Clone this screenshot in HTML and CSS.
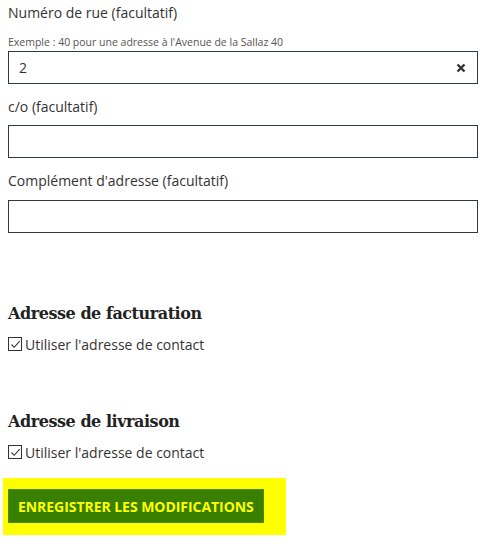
FILE: index.html
```html
<!DOCTYPE html>
<html lang="fr">
<head>
<meta charset="utf-8">
<link rel="stylesheet" href="styles.css">
</head>
<body>
<form class="form">
  <div class="field">
    <label class="label">Numéro de rue (facultatif)</label>
    <div class="hint">Exemple : 40 pour une adresse à l'Avenue de la Sallaz 40</div>
    <div class="input">
      <span class="value">2</span>
      <svg class="clear" width="10" height="10" viewBox="0 0 10 10"><path d="M1.5 1.5L8.5 8.5M8.5 1.5L1.5 8.5" stroke="#333" stroke-width="2.4" stroke-linecap="butt"/></svg>
    </div>
  </div>
  <div class="field">
    <label class="label label-gap">c/o (facultatif)</label>
    <div class="input"></div>
  </div>
  <div class="field">
    <label class="label label-gap label-last">Complément d'adresse (facultatif)</label>
    <div class="input"></div>
  </div>

  <h2 class="heading first">Adresse de facturation</h2>
  <div class="check">
    <span class="box"><svg width="11" height="11" viewBox="0 0 11 11"><path d="M1.5 5.5L4.2 8.3L9.7 2.2" fill="none" stroke="#333" stroke-width="1.1"/></svg></span>
    <span class="check-label">Utiliser l'adresse de contact</span>
  </div>

  <h2 class="heading">Adresse de livraison</h2>
  <div class="check">
    <span class="box"><svg width="11" height="11" viewBox="0 0 11 11"><path d="M1.5 5.5L4.2 8.3L9.7 2.2" fill="none" stroke="#333" stroke-width="1.1"/></svg></span>
    <span class="check-label">Utiliser l'adresse de contact</span>
  </div>

  <div class="actions">
    <button type="button" class="save">ENREGISTRER LES MODIFICATIONS</button>
  </div>
</form>
</body>
</html>
```

FILE: styles.css
```css
html, body {
  margin: 0;
  padding: 0;
  background: #fff;
}
body {
  padding: 0 8px;
  font-family: "Open Sans", "Liberation Sans", sans-serif;
  color: #333;
}
.form {
  display: flex;
  flex-direction: column;
}
.field {
  display: flex;
  flex-direction: column;
}
.label {
  display: block;
  font-size: 14px;
  line-height: 20px;
  padding-top: 3px;
  color: #333;
}
.label-gap {
  padding-top: 13px;
  margin-bottom: 8px;
}
.label-last {
  margin-bottom: 9px;
}
.hint {
  font-size: 10.5px;
  line-height: 14px;
  color: #555;
  margin-top: 12px;
  margin-bottom: 2px;
}
.input {
  box-sizing: border-box;
  width: 470px;
  height: 33px;
  border: 1px solid #2b3a45;
  display: flex;
  align-items: center;
  padding: 0 11px 0 10px;
}
.value {
  flex: 1;
  font-size: 14px;
  color: #333;
}
.clear {
  display: block;
}
.heading {
  font-family: "DejaVu Serif", "Liberation Serif", serif;
  font-weight: bold;
  font-size: 16px;
  letter-spacing: -0.45px;
  line-height: 22px;
  color: #222;
  margin: 57px 0 0;
}
.heading.first {
  margin-top: 70px;
}
.check {
  display: flex;
  align-items: center;
  margin-top: 9px;
  height: 20px;
}
.box {
  box-sizing: border-box;
  width: 14px;
  height: 14px;
  border: 1px solid #333;
  display: flex;
  align-items: center;
  justify-content: center;
  margin-right: 3px;
}
.box svg {
  display: block;
}
.check-label {
  font-size: 14px;
  color: #333;
}
.actions {
  margin: 16px 0 0 -5px;
  width: 283px;
  box-sizing: border-box;
  background: #ffff00;
  padding: 11px 5px 12px;
}
.save {
  display: block;
  height: 34px;
  padding: 0 9px;
  border: 1px solid #4a8a1a;
  background: #3a8000;
  color: #ffff00;
  font-family: "Open Sans", "Liberation Sans", sans-serif;
  font-weight: bold;
  font-size: 14px;
  letter-spacing: -0.05px;
  cursor: pointer;
}
```
